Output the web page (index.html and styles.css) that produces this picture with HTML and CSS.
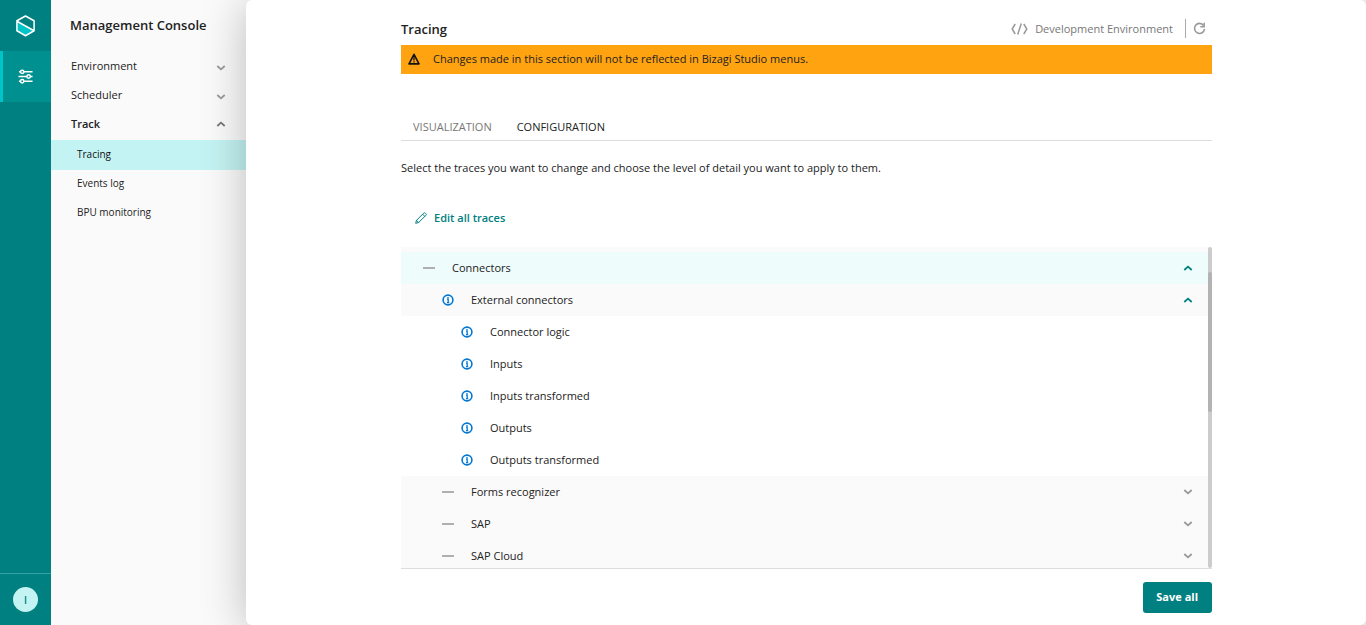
FILE: index.html
```html
<!DOCTYPE html>
<html lang="en">
<head>
<meta charset="utf-8">
<title>Management Console - Tracing</title>
<link rel="stylesheet" href="styles.css">
</head>
<body>
<svg class="sprite" aria-hidden="true">
  <symbol id="down" viewBox="0 0 10 6"><path d="M1.300 1L5 4.300 8.700 1" fill="none" stroke="currentColor" stroke-width="1.800"/></symbol>
  <symbol id="up" viewBox="0 0 10 6"><path d="M1.300 5L5 1.700 8.700 5" fill="none" stroke="currentColor" stroke-width="1.800"/></symbol>
  <symbol id="info" viewBox="0 0 12 12"><circle cx="6" cy="6" r="4.900" fill="none" stroke="currentColor" stroke-width="1.600"/><path d="M6 2.900v1.300M5 5.200H6.200V8.500M5 8.600h2.200" fill="none" stroke="currentColor" stroke-width="1.300"/></symbol>
  <symbol id="dash" viewBox="0 0 12 12"><path d="M0 6h12" stroke="#b0b0b0" stroke-width="2"/></symbol>
</svg>
<div class="app">
  <aside class="rail">
    <a class="rail-item" href="#" aria-label="Home">
      <svg width="21" height="24" viewBox="0 0 22 24"><path d="M2 7.500L20 17l-9 5-9-5z" fill="#00c4c8"/><path d="M11 1.500l9 5V17l-9 5.200L2 17V6.500z M2 7l18 10" fill="none" stroke="#fff" stroke-width="1.600" stroke-linejoin="round"/></svg>
    </a>
    <a class="rail-item rail-active" href="#" aria-label="Settings">
      <svg width="15" height="15" viewBox="0 0 16 16" fill="none" stroke="#fff" stroke-width="1.600"><path d="M1 3h2M6 3h9.500M.5 8h9M13 8h2.500M1 13h2M6 13h9.500"/><circle cx="4.500" cy="3" r="1.800"/><circle cx="11.300" cy="8" r="1.800"/><circle cx="4.500" cy="13" r="1.800"/></svg>
    </a>
    <div class="rail-user"><button class="avatar">I</button></div>
  </aside>
  <nav class="menu">
    <h1 class="menu-title">Management Console</h1>
    <button class="menu-item">Environment <svg class="chev low"><use href="#down"/></svg></button>
    <button class="menu-item">Scheduler <svg class="chev low"><use href="#down"/></svg></button>
    <button class="menu-item open">Track <svg class="chev"><use href="#up"/></svg></button>
    <div class="submenu">
      <a class="sub-item current" href="#">Tracing</a>
      <a class="sub-item" href="#">Events log</a>
      <a class="sub-item" href="#">BPU monitoring</a>
    </div>
  </nav>
  <main class="main">
    <header class="header">
      <h2 class="title">Tracing</h2>
      <div class="env">
        <svg width="17" height="12" viewBox="0 0 17 12" fill="none" stroke="#999" stroke-width="1.500"><path d="M4.200 1L1.200 6l3 5M12.800 1l3 5-3 5M10.300.5L6.700 11.500"/></svg>
        <span>Development Environment</span>
        <button class="refresh" aria-label="Refresh"><svg width="13" height="13" viewBox="0 0 13 13"><path d="M10.600 3.500A5 5 0 1 0 11.500 7" fill="none" stroke="#999" stroke-width="1.600"/><path d="M11.200.8v4H7.300" fill="none" stroke="#999" stroke-width="1.500"/></svg></button>
      </div>
    </header>
    <div class="alert" role="alert">
      <svg width="12" height="12" viewBox="0 0 12 12" fill="none" stroke="#111" stroke-width="1.600" stroke-linejoin="round"><path d="M6 1.300L11 10.900H1z"/><path d="M6 4.300v3.300M6 8.300v1.200" stroke-width="1.300"/></svg>
      <span>Changes made in this section will not be reflected in Bizagi Studio menus.</span>
    </div>
    <div class="tabs" role="tablist">
      <button class="tab" role="tab">VISUALIZATION</button>
      <button class="tab selected" role="tab" aria-selected="true">CONFIGURATION</button>
    </div>
    <p class="intro">Select the traces you want to change and choose the level of detail you want to apply to them.</p>
    <button class="edit">
      <svg width="12" height="12" viewBox="0 0 12 12" fill="none" stroke="currentColor" stroke-width="1"><path d="M.7 11.300l.8-3L8.600 1.200q.9-.9 1.800 0l.4.4q.9.9 0 1.800L3.700 10.500zM7.600 2.200l2.200 2.200M1.500 8.300l2.200 2.200"/></svg>
      Edit all traces
    </button>
    <section class="traces">
      <div class="tree">
        <button class="row level1"><svg class="mark"><use href="#dash"/></svg><span>Connectors</span><svg class="chev"><use href="#up"/></svg></button>
        <button class="row level2 expanded"><svg class="mark"><use href="#info"/></svg><span>External connectors</span><svg class="chev"><use href="#up"/></svg></button>
        <button class="row level3"><svg class="mark"><use href="#info"/></svg><span>Connector logic</span></button>
        <button class="row level3"><svg class="mark"><use href="#info"/></svg><span>Inputs</span></button>
        <button class="row level3"><svg class="mark"><use href="#info"/></svg><span>Inputs transformed</span></button>
        <button class="row level3"><svg class="mark"><use href="#info"/></svg><span>Outputs</span></button>
        <button class="row level3"><svg class="mark"><use href="#info"/></svg><span>Outputs transformed</span></button>
        <button class="row level2"><svg class="mark"><use href="#dash"/></svg><span>Forms recognizer</span><svg class="chev"><use href="#down"/></svg></button>
        <button class="row level2"><svg class="mark"><use href="#dash"/></svg><span>SAP</span><svg class="chev"><use href="#down"/></svg></button>
        <button class="row level2"><svg class="mark"><use href="#dash"/></svg><span>SAP Cloud</span><svg class="chev"><use href="#down"/></svg></button>
      </div>
      <div class="track"><div class="thumb"></div></div>
    </section>
    <footer class="footer"><button class="save">Save all</button></footer>
  </main>
</div>
</body>
</html>
```
FILE: styles.css
```css
* { box-sizing: border-box; }
body {
  margin: 0;
  background: #fafafa;
  color: #222;
  font: 11px/16px "Open Sans", "Noto Sans", sans-serif;
}
button {
  margin: 0;
  padding: 0;
  border: 0;
  background: none;
  color: inherit;
  font: inherit;
  text-align: left;
  cursor: pointer;
}
a { color: inherit; text-decoration: none; }
svg { display: block; flex: none; }
.sprite { position: absolute; width: 0; height: 0; }
.app { display: grid; grid-template-columns: 51px 195px 1fr; height: 100vh; }

.rail { display: flex; flex-direction: column; background: #008080; }
.rail-item { display: flex; align-items: center; justify-content: center; height: 51px; }
.rail-active { padding-right: 3px; border-left: 3px solid #00c4c8; background: #009090; }
.rail-user {
  display: flex;
  justify-content: center;
  margin-top: auto;
  padding: 13px 0;
  border-top: 1px solid #33a3a3;
}
.avatar {
  width: 25px;
  height: 25px;
  border-radius: 50%;
  background: #c3f3f2;
  color: #008080;
  font-weight: 600;
  font-size: 10px;
  text-align: center;
}

.menu { display: flex; flex-direction: column; }
.menu-title { margin: 0; padding: 15px 19px 16px; font-size: 13px; line-height: 20px; font-weight: 600; }
.menu-item {
  display: flex;
  align-items: center;
  justify-content: space-between;
  height: 29px;
  padding: 0 20px;
}
.open { font-weight: 600; }
.chev { width: 10px; height: 6px; color: #999; }
.low { margin-top: 4px; }
.open .chev { color: #777; }
.submenu { display: flex; flex-direction: column; margin-top: 2px; font-size: 10px; }
.sub-item { padding: 0 26px; line-height: 29px; }
.current { background: #c3f3f2; box-shadow: 0 1px #c3f3f2; color: #111; }

.main {
  display: flex;
  flex-direction: column;
  min-width: 0;
  min-height: 0;
  padding: 19px 154px 12px 155px;
  border-radius: 6px;
  background: #fff;
  box-shadow: 0 4px 45px rgba(0, 0, 0, .25);
}
.header { display: flex; align-items: center; justify-content: space-between; height: 26px; padding-bottom: 7px; }
.title { margin: 0; font-size: 13px; line-height: 20px; font-weight: 600; }
.env { display: flex; align-items: center; gap: 7px; color: #777; }
.refresh { margin-left: 5px; padding: 3px 6px 3px 7px; border-left: 1px solid #aaa; }
.alert { display: flex; align-items: center; gap: 13px; height: 29px; padding: 0 7px 1px; background: #ffa311; }
.tabs { display: flex; gap: 25px; height: 38px; margin-top: 29px; padding: 10px 12px 0; border-bottom: 1px solid #ddd; }
.tab { color: #777; }
.selected { color: #222; }
.intro { margin: 19px 0 0; }
.edit {
  display: flex;
  align-items: center;
  align-self: flex-start;
  gap: 7px;
  margin: 34px 0 21px 14px;
  color: #008080;
  font-weight: 600;
}
.traces { display: flex; flex: 1; min-height: 0; border-bottom: 1px solid #ddd; }
.tree { flex: 1; overflow-y: auto; padding-top: 5px; background: linear-gradient(#fafafa 5px, #fff 5px); scrollbar-width: none; }
.row { display: flex; align-items: center; gap: 17px; width: 100%; height: 32px; padding-right: 15px; }
.row .chev { margin-left: auto; }
.mark { width: 12px; height: 12px; color: #0078d4; }
.level1 { padding-left: 22px; background: #eefcfb; }
.level2 { padding-left: 41px; background: #fafafa; }
.level3 { padding-left: 60px; }
.level1 .chev, .expanded .chev { color: #008080; }
.track { width: 4px; padding-top: 25px; border-radius: 2px; background: #ccc; }
.thumb { height: 140px; border-radius: 2px; background: #b3b3b3; }
.footer { display: flex; justify-content: flex-end; padding-top: 13px; }
.save { height: 31px; padding: 0 14px 1px 13px; border-radius: 3px; background: #008080; color: #fff; font-weight: 700; }
```
